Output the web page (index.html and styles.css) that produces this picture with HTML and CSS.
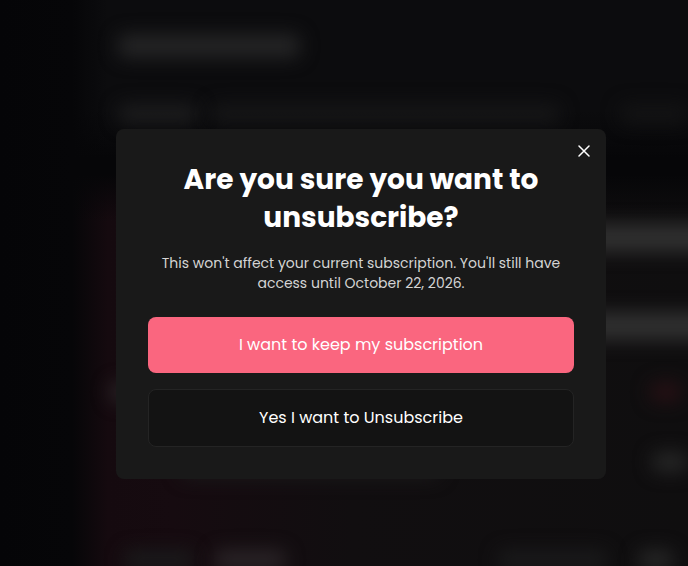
FILE: index.html
```html
<!DOCTYPE html>
<html lang="en">
<head>
	<meta charset="UTF-8">
	<meta name="viewport" content="width=device-width, initial-scale=1">
	<title>Unsubscribe</title>
	<link rel="stylesheet" href="styles.css">
</head>
<body>
	<!-- blurred page under the dialog -->
	<div class="page" aria-hidden="true">
		<div class="sidebar"></div>
		<div class="main">
			<div class="top">
				<div class="bar heading"></div>
				<div class="tabs">
					<div class="bar tab-active"></div>
					<div class="bar tab-list"></div>
					<div class="bar tab-rest"></div>
				</div>
			</div>
			<div class="card">
				<div class="row"><div class="bar price"></div></div>
				<div class="row"><div class="bar price"></div></div>
				<div class="row"><div class="bar dot"></div><div class="bar red"></div></div>
				<div class="row"><div class="bar note"></div><div class="bar amount"></div></div>
				<div class="row last">
					<div class="bar label"></div>
					<div class="bar value"></div>
					<div class="bar label-wide"></div>
					<div class="bar amount"></div>
				</div>
			</div>
		</div>
	</div>

	<div class="overlay">
		<div class="modal" role="dialog" aria-modal="true" aria-labelledby="modal-title">
			<button type="button" class="close" aria-label="Close">
				<svg width="12" height="12" viewBox="0 0 12 12" fill="none" stroke="currentColor" stroke-width="1.5" stroke-linecap="round">
					<path d="M1 1l10 10M11 1L1 11"/>
				</svg>
			</button>
			<h1 id="modal-title">Are you sure you want to unsubscribe?</h1>
			<p>This won't affect your current subscription. You'll still have access until October 22, 2026.</p>
			<div class="actions">
				<button type="button" class="btn btn-primary">I want to keep my subscription</button>
				<button type="button" class="btn btn-outline">Yes I want to Unsubscribe</button>
			</div>
		</div>
	</div>
</body>
</html>
```
FILE: styles.css
```css
* {
	margin: 0;
	padding: 0;
	box-sizing: border-box;
}
body {
	background: #060608;
	font-family: Poppins, Inter, "Open Sans", sans-serif;
	color: #fff;
	overflow: hidden;
	-webkit-font-smoothing: antialiased;
}

/* page behind */
.page {
	position: fixed;
	inset: 0;
	display: flex;
	overflow: hidden;
}
.sidebar {
	flex: 0 0 72px;
	background: linear-gradient(to right, #050507, #060608);
}
.main {
	flex: 1;
	min-width: 0;
}
.top {
	padding: 34px 0 34px 46px;
	background: linear-gradient(to right, #060608, transparent 36px), linear-gradient(to bottom, #0c0c0e 70%, #060608);
}
.bar {
	flex: none;
	height: 20px;
	border-radius: 8px;
	background: #1a1a1b;
	filter: blur(9px);
}
.heading {
	width: 182px;
	height: 24px;
	background: #242425;
}
.tabs {
	display: flex;
	margin-top: 46px;
}
.tab-active {
	width: 80px;
	background: #1c1c1d;
}
.tab-list {
	width: 350px;
	margin-left: 12px;
	background: #161617;
}
.tab-rest {
	flex: 1;
	margin-left: 60px;
	background: #131314;
}
.card {
	min-height: 100vh;
	margin-top: 16px;
	padding: 50px 0 0 38px;
	background: linear-gradient(to bottom, #060608, transparent 48px), linear-gradient(to right, #060608, #150a0f 36px, #160b10 100px, #110e10 280px, #0f0e0f);
}
.row {
	display: flex;
	justify-content: flex-end;
	margin-bottom: 60px;
}
.price {
	width: 200px;
	height: 28px;
	margin-right: -20px;
	background: #303030;
}
.row:nth-child(2) {
	margin-bottom: 42px;
}
.dot {
	width: 24px;
	margin-right: auto;
	background: #2a2527;
}
.red {
	width: 32px;
	margin-right: 6px;
	background: #261014;
}
.row:nth-child(3) {
	margin-bottom: 50px;
}
.note {
	width: 260px;
	height: 26px;
	margin-left: 70px;
	margin-right: auto;
	background: #1b191a;
}
.amount {
	width: 36px;
	background: #262626;
}
.last {
	margin-top: 72px;
	justify-content: flex-start;
}
.row:nth-child(4) {
	margin-bottom: 0;
}
.label {
	width: 70px;
	margin-left: 14px;
}
.value {
	width: 72px;
	margin-left: 20px;
	background: #2a2427;
}
.label-wide {
	width: 110px;
	margin-left: auto;
	margin-right: 30px;
}
.last .amount {
	margin-right: 14px;
}

.overlay {
	position: relative;
	display: flex;
	align-items: center;
	justify-content: center;
	min-height: 100vh;
	padding: 42px 0 0 34px;
}
.modal {
	position: relative;
	width: 100%;
	max-width: 490px;
	padding: 32px;
	border-radius: 8px;
	background: #191919;
	text-align: center;
}
.modal h1 {
	font-size: 28px;
	line-height: 38px;
	font-weight: 700;
}
.modal p {
	margin-top: 16px;
	font-size: 14px;
	line-height: 20px;
	color: #d4d4d4;
}
.close {
	position: absolute;
	top: 12px;
	right: 12px;
	display: flex;
	align-items: center;
	justify-content: center;
	width: 20px;
	height: 20px;
	border: 0;
	background: none;
	color: #fff;
	cursor: pointer;
}
.actions {
	display: flex;
	flex-direction: column;
	gap: 16px;
	margin-top: 24px;
}
.btn {
	padding: 16px;
	border: 0;
	border-radius: 8px;
	font-family: inherit;
	font-size: 16px;
	line-height: 24px;
	font-weight: 400;
	color: #fff;
	cursor: pointer;
}
.btn-primary {
	background: #fa667f;
}
.btn-outline {
	border: 1px solid #242424;
	background: #131313;
}
```
